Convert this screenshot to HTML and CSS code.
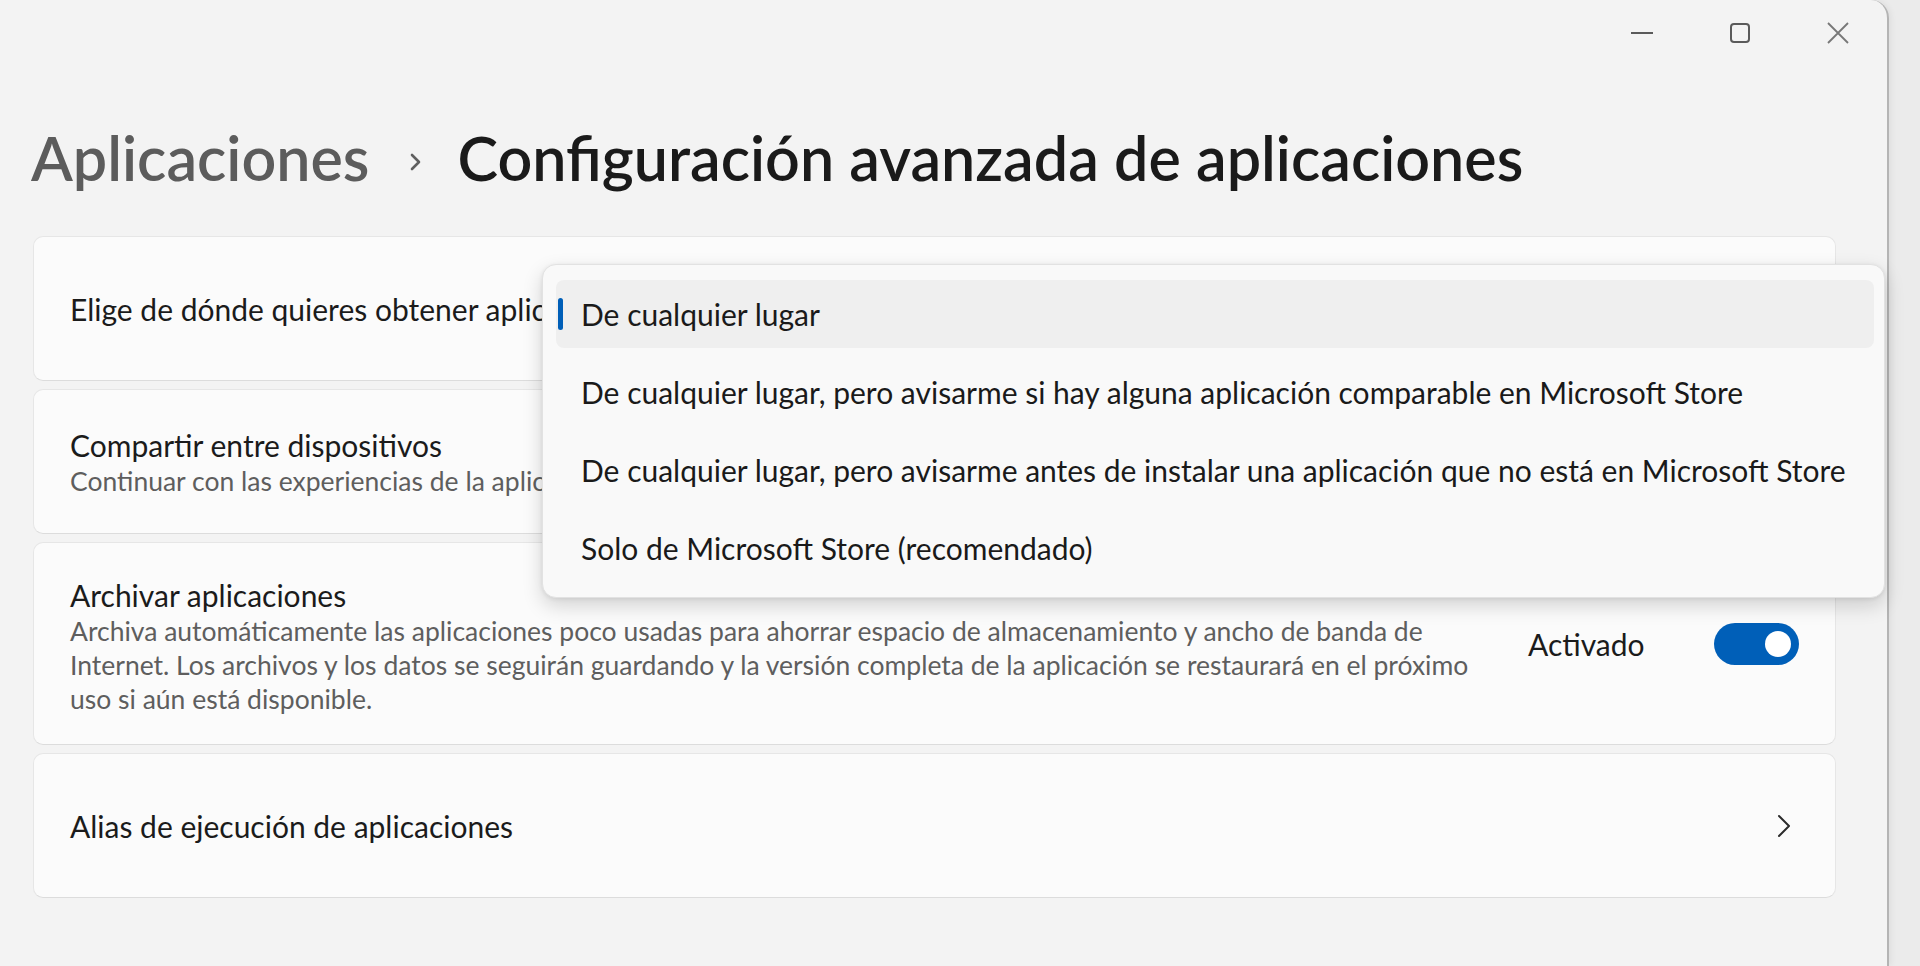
FILE: index.html
```html
<!DOCTYPE html>
<html lang="es">
<head>
<meta charset="utf-8">
<title>Configuración avanzada de aplicaciones</title>
<link rel="stylesheet" href="styles.css">
</head>
<body>
<div class="window">
  <div class="titlebar">
    <div class="ctl">
      <svg width="22" height="22" viewBox="0 0 22 22"><line x1="0" y1="11" x2="22" y2="11" stroke="#5a5a5a" stroke-width="2"/></svg>
    </div>
    <div class="ctl">
      <svg width="22" height="22" viewBox="0 0 22 22"><rect x="2" y="2" width="18" height="18" rx="3" fill="none" stroke="#5a5a5a" stroke-width="2"/></svg>
    </div>
    <div class="ctl">
      <svg width="22" height="22" viewBox="0 0 22 22"><path d="M1 1 L21 21 M21 1 L1 21" stroke="#777777" stroke-width="1.8" fill="none"/></svg>
    </div>
  </div>

  <div class="header">
    <h1 class="crumbs">
      <span class="crumb-parent">Aplicaciones</span>
      <svg class="crumb-sep" width="12" height="18" viewBox="0 0 12 18"><path d="M2 2 L9 9 L2 16" stroke="#5f5f5f" stroke-width="2.6" fill="none" stroke-linecap="round" stroke-linejoin="round"/></svg>
      <span class="crumb-current">Configuración avanzada de aplicaciones</span>
    </h1>
  </div>

  <div class="cards">
    <div class="card card-std">
      <div class="card-text">
        <div class="card-title">Elige de dónde quieres obtener aplicaciones</div>
      </div>
    </div>

    <div class="card card-std">
      <div class="card-text">
        <div class="card-title">Compartir entre dispositivos</div>
        <div class="card-desc">Continuar con las experiencias de la aplicación en otros dispositivos</div>
      </div>
    </div>

    <div class="card card-tall">
      <div class="card-text card-text-wide">
        <div class="card-title">Archivar aplicaciones</div>
        <div class="card-desc">Archiva automáticamente las aplicaciones poco usadas para ahorrar espacio de almacenamiento y ancho de banda de Internet. Los archivos y los datos se seguirán guardando y la versión completa de la aplicación se restaurará en el próximo uso si aún está disponible.</div>
      </div>
      <div class="card-action">
        <span class="toggle-label">Activado</span>
        <div class="toggle"><div class="knob"></div></div>
      </div>
    </div>

    <div class="card card-std">
      <div class="card-text">
        <div class="card-title">Alias de ejecución de aplicaciones</div>
      </div>
      <svg class="chev" width="14" height="24" viewBox="0 0 14 24"><path d="M2 2 L12 12 L2 22" stroke="#2b2b2b" stroke-width="2" fill="none" stroke-linecap="round" stroke-linejoin="round"/></svg>
    </div>
  </div>

  <div class="dropdown">
    <div class="item selected"><span class="accent"></span>De cualquier lugar</div>
    <div class="item">De cualquier lugar, pero avisarme si hay alguna aplicación comparable en Microsoft Store</div>
    <div class="item">De cualquier lugar, pero avisarme antes de instalar una aplicación que no está en Microsoft Store</div>
    <div class="item">Solo de Microsoft Store (recomendado)</div>
  </div>
</div>
</body>
</html>
```

FILE: styles.css
```css
* { box-sizing: border-box; }

html, body {
  margin: 0;
  padding: 0;
}

body {
  width: 1920px;
  height: 966px;
  overflow: hidden;
  background: #ebebeb;
  font-family: "Lato", "Noto Sans", sans-serif;
  color: #1b1b1b;
}

.window {
  position: relative;
  width: 1889px;
  height: 966px;
  background: #f3f3f3;
  border-right: 2px solid #b4b4b4;
  border-top-right-radius: 18px;
  box-shadow: 2px 0 6px rgba(0,0,0,0.06);
}

.titlebar {
  height: 66px;
  display: flex;
  justify-content: flex-end;
}

.ctl {
  width: 98px;
  display: flex;
  align-items: center;
  justify-content: center;
}

.header {
  padding: 54px 0 0 31px;
}

.crumbs {
  margin: 0;
  display: flex;
  align-items: center;
  font-size: 61px;
  font-weight: 600;
  line-height: 76px;
  height: 76px;
}

.crumb-parent {
  color: #5c5c5c;
}

.crumb-sep {
  margin: 8px 36px 0 40px;
}

.crumb-current {
  color: #1a1a1a;
}

.cards {
  margin-top: 40px;
  padding: 0 51px 0 33px;
  display: flex;
  flex-direction: column;
  gap: 8px;
}

.card {
  display: flex;
  align-items: center;
  padding: 0 36px;
  background: #fbfbfb;
  border: 1px solid #e6e6e6;
  border-bottom-color: #dcdcdc;
  border-radius: 10px;
}

.card-std { height: 145px; }
.card-tall { height: 203px; }

.card-text {
  flex: 1;
  min-width: 0;
  white-space: nowrap;
}

.card-text-wide {
  white-space: normal;
  padding-right: 40px;
  margin-top: 4px;
}

.card-title {
  font-size: 30px;
  line-height: 38px;
  color: #1b1b1b;
}

.card-desc {
  font-size: 26.5px;
  line-height: 34px;
  color: #5e5e5e;
}

.card-action {
  display: flex;
  align-items: center;
}

.toggle-label {
  width: 186px;
  font-size: 30px;
  color: #1b1b1b;
}

.toggle {
  width: 85px;
  height: 42px;
  border-radius: 21px;
  background: #005fb8;
  display: flex;
  align-items: center;
  justify-content: flex-end;
  padding-right: 8px;
}

.knob {
  width: 26px;
  height: 26px;
  border-radius: 50%;
  background: #ffffff;
}

.chev {
  margin-right: 8px;
}

.dropdown {
  position: absolute;
  left: 542px;
  top: 264px;
  width: 1343px;
  height: 334px;
  padding: 15px 10px 0 13px;
  background: #f9f9f9;
  border: 1px solid #e2e2e2;
  border-radius: 14px;
  box-shadow: 0 8px 20px rgba(0,0,0,0.16), 0 1px 4px rgba(0,0,0,0.08);
  display: flex;
  flex-direction: column;
  gap: 10px;
}

.item {
  position: relative;
  height: 68px;
  display: flex;
  align-items: center;
  padding-left: 25px;
  border-radius: 8px;
  font-size: 30px;
  color: #1a1a1a;
  white-space: nowrap;
}

.item.selected {
  background: #efefef;
}

.accent {
  position: absolute;
  left: 2px;
  top: 18px;
  width: 5px;
  height: 32px;
  border-radius: 3px;
  background: #005fb8;
}
```
